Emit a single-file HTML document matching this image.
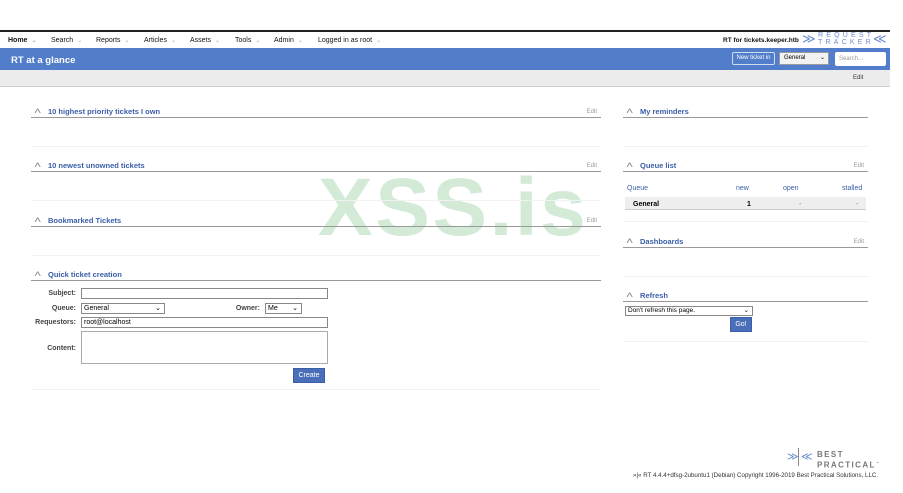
<!DOCTYPE html>
<html><head><meta charset="utf-8"><style>
*{box-sizing:border-box;margin:0;padding:0}
body{width:903px;height:493px;background:#fff;font-family:"Liberation Sans",Arial,sans-serif;position:relative;overflow:hidden;font-size:7px;color:#000}
.a{position:absolute}
.topline{left:0;top:30px;width:890px;height:2px;background:#222}
.nav{left:0;top:32px;width:890px;height:16px}
.nav span{position:absolute;top:5px;font-size:7px;color:#111}
.nav span i{font-style:normal;color:#aaa;margin-left:4px;font-size:6px}
.blue{left:0;top:48px;width:890px;height:22px;background:#527dcb}
.grey{left:0;top:70px;width:890px;height:17px;background:#ececec;border-bottom:1px solid #ccc}
.hdr{position:absolute;height:12px;border-bottom:1.5px solid #999}
.hdr b{position:absolute;left:17px;top:1px;color:#3a5ea8;font-size:7.5px}
.hdr .c{position:absolute;left:4px;top:0px;color:#888;font-size:9px;line-height:10px;transform:scaleX(1.4)}
.hdr .e{position:absolute;right:4px;top:3px;color:#999;font-size:6px}
.sep{position:absolute;height:1px;background:#f2f2f2}
.lbl{position:absolute;font-size:7px;color:#444;text-align:right;font-weight:bold}
.inp{position:absolute;border:1px solid #888;height:11px;background:#fff;font-size:7px;padding-left:2px;line-height:9px}
.btn{position:absolute;background:#4a6fb8;color:#fff;font-size:7px;text-align:center;border:1px solid #3a5ea8}
</style></head><body>
<div class="a topline"></div>
<div class="a nav">
<span style="left:8px;font-weight:bold">Home<i>⌄</i></span>
<span style="left:51px">Search<i>⌄</i></span>
<span style="left:96px">Reports<i>⌄</i></span>
<span style="left:144px">Articles<i>⌄</i></span>
<span style="left:190px">Assets<i>⌄</i></span>
<span style="left:235px">Tools<i>⌄</i></span>
<span style="left:274px">Admin<i>⌄</i></span>
<span style="left:318px">Logged in as root<i>⌄</i></span>
<span style="left:723px;font-weight:bold;font-size:6.5px">RT for tickets.keeper.htb</span>
</div>
<div class="a" style="left:802px;top:31px;font-size:13px;color:#6b8bd0;letter-spacing:-2px">≫</div>
<div class="a" style="left:818px;top:32px;font-size:7px;color:#6b8bd0;letter-spacing:3.2px;line-height:7px">REQUEST<br>TRACKER</div>
<div class="a" style="left:873px;top:31px;font-size:13px;color:#6b8bd0;letter-spacing:-2px">≪</div>
<div class="a blue"></div>
<div class="a" style="left:11px;top:55px;color:#fff;font-weight:bold;font-size:9.5px">RT at a glance</div>
<div class="a" style="left:732px;top:52px;width:43px;height:13px;border:1px solid #d0dcf2;border-radius:2px;color:#fff;font-size:6px;text-align:center;line-height:11px">New ticket in</div>
<div class="a" style="left:779px;top:52px;width:50px;height:13px;background:#f2f2f2;border:1px solid #999;font-size:6px;padding-left:4px;line-height:11px">General <span style="float:right;margin-right:3px">⌄</span></div>
<div class="a" style="left:835px;top:52px;width:51px;height:14px;background:#fff;border-radius:2px;font-size:6px;color:#999;padding-left:4px;line-height:14px">Search...</div>
<div class="a grey"></div>
<div class="a" style="left:853px;top:75px;font-size:6px;color:#333">Edit</div>

<div class="a" style="left:318px;top:163px;font-size:82px;font-weight:bold;color:#d2ead6;letter-spacing:2.5px;line-height:90px">XSS.is</div>

<div class="hdr" style="left:31px;top:106px;width:570px"><span class="c">˄</span><b>10 highest priority tickets I own</b><span class="e">Edit</span></div>
<div class="sep" style="left:31px;top:146px;width:570px"></div>
<div class="hdr" style="left:31px;top:160px;width:570px"><span class="c">˄</span><b>10 newest unowned tickets</b><span class="e">Edit</span></div>
<div class="sep" style="left:31px;top:200px;width:570px"></div>
<div class="hdr" style="left:31px;top:215px;width:570px"><span class="c">˄</span><b>Bookmarked Tickets</b><span class="e">Edit</span></div>
<div class="sep" style="left:31px;top:255px;width:570px"></div>
<div class="hdr" style="left:31px;top:269px;width:570px"><span class="c">˄</span><b>Quick ticket creation</b></div>

<div class="lbl" style="left:30px;top:290px;width:46px">Subject:</div>
<div class="inp" style="left:81px;top:288px;width:247px"></div>
<div class="lbl" style="left:30px;top:305px;width:46px">Queue:</div>
<div class="inp" style="left:81px;top:303px;width:84px">General<span style="float:right;margin-right:3px">⌄</span></div>
<div class="lbl" style="left:230px;top:305px;width:30px">Owner:</div>
<div class="inp" style="left:265px;top:303px;width:37px">Me<span style="float:right;margin-right:3px">⌄</span></div>
<div class="lbl" style="left:20px;top:319px;width:56px">Requestors:</div>
<div class="inp" style="left:81px;top:317px;width:247px">root@localhost</div>
<div class="lbl" style="left:30px;top:345px;width:46px">Content:</div>
<div class="inp" style="left:81px;top:331px;width:247px;height:33px;border-color:#aaa"></div>
<div class="btn" style="left:293px;top:368px;width:32px;height:15px;line-height:13px">Create</div>
<div class="sep" style="left:31px;top:389px;width:570px"></div>

<div class="hdr" style="left:623px;top:106px;width:245px"><span class="c">˄</span><b>My reminders</b></div>
<div class="sep" style="left:623px;top:146px;width:245px"></div>
<div class="hdr" style="left:623px;top:160px;width:245px"><span class="c">˄</span><b>Queue list</b><span class="e">Edit</span></div>
<div class="a" style="left:627px;top:185px;color:#3a5ea8;font-size:7px">Queue</div>
<div class="a" style="left:736px;top:185px;color:#3a5ea8;font-size:7px">new</div>
<div class="a" style="left:783px;top:185px;color:#3a5ea8;font-size:7px">open</div>
<div class="a" style="left:842px;top:185px;color:#3a5ea8;font-size:7px">stalled</div>
<div class="a" style="left:625px;top:197px;width:241px;height:13px;background:#eee;border-bottom:1px solid #ccc"></div>
<div class="a" style="left:633px;top:201px;font-weight:bold;font-size:7px">General</div>
<div class="a" style="left:747px;top:201px;font-weight:bold;font-size:7px">1</div>
<div class="a" style="left:799px;top:201px;font-size:7px;color:#777">-</div>
<div class="a" style="left:856px;top:201px;font-size:7px;color:#777">-</div>
<div class="sep" style="left:623px;top:221px;width:245px"></div>
<div class="hdr" style="left:623px;top:236px;width:245px"><span class="c">˄</span><b>Dashboards</b><span class="e">Edit</span></div>
<div class="sep" style="left:623px;top:276px;width:245px"></div>
<div class="hdr" style="left:623px;top:290px;width:245px"><span class="c">˄</span><b>Refresh</b></div>
<div class="inp" style="left:625px;top:306px;width:128px;height:10px;line-height:8px;font-size:6.5px">Don't refresh this page.<span style="float:right;margin-right:3px">⌄</span></div>
<div class="btn" style="left:730px;top:317px;width:22px;height:15px;line-height:13px">Go!</div>
<div class="sep" style="left:623px;top:341px;width:245px"></div>

<div class="a" style="left:787px;top:450px;font-size:11px;color:#6b8bd0;letter-spacing:-2px">≫</div>
<div class="a" style="left:798px;top:448px;width:1px;height:18px;background:#888"></div>
<div class="a" style="left:801px;top:450px;font-size:11px;color:#6b8bd0;letter-spacing:-2px">≪</div>
<div class="a" style="left:817px;top:450px;font-size:8px;color:#777;letter-spacing:1.4px;line-height:9px;font-weight:bold">BEST<br>PRACTICAL<sup style="font-size:3px">™</sup></div>
<div class="a" style="left:633px;top:472px;font-size:6.2px;color:#333">»|« RT 4.4.4+dfsg-2ubuntu1 (Debian) Copyright 1996-2019 Best Practical Solutions, LLC.</div>
</body></html>
